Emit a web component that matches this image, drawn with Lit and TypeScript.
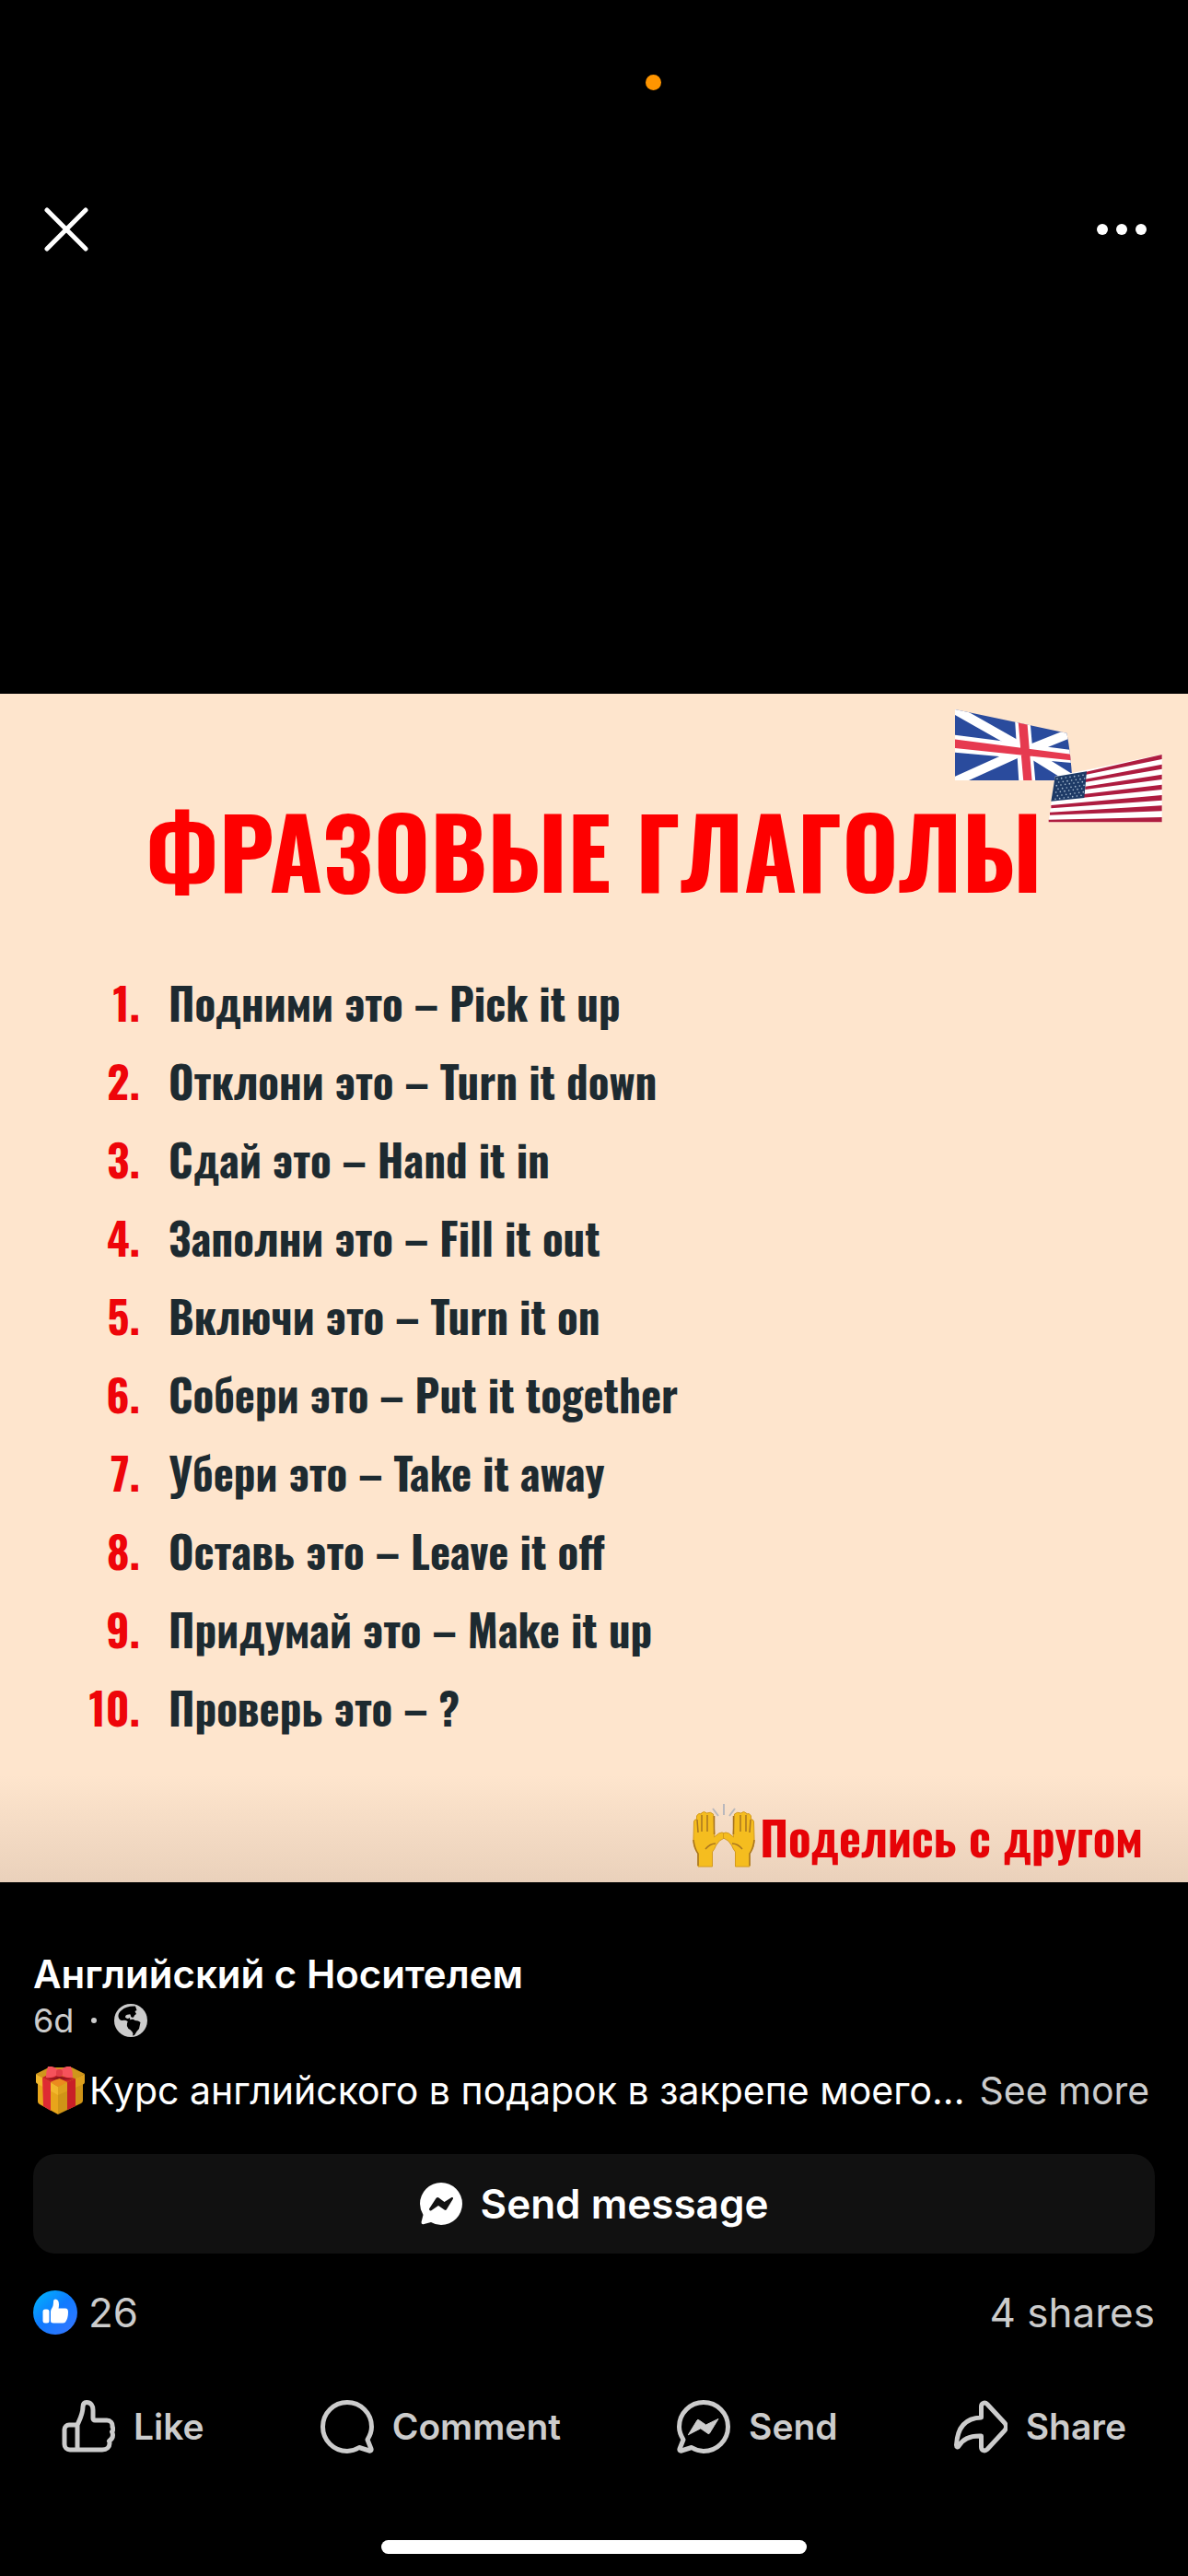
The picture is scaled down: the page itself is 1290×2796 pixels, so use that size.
import { LitElement, html, css, svg } from "lit";
import { customElement } from "lit/decorators.js";

const VERBS = [
  "Подними это – Pick it up",
  "Отклони это – Turn it down",
  "Сдай это – Hand it in",
  "Заполни это – Fill it out",
  "Включи это – Turn it on",
  "Собери это – Put it together",
  "Убери это – Take it away",
  "Оставь это – Leave it off",
  "Придумай это – Make it up",
  "Проверь это – ?",
];

// Staggered rows of dots for the star field of the US flag.
const STARS = Array.from({ length: 7 }, (_, r) =>
  Array.from({ length: 7 }, (_, c) => ({
    x: 444 + c * 14 + (r % 2) * 6 - r,
    y: 316 + r * 11 - c * 2,
  }))
).flat();

const ACTIONS = [
  {
    label: "Like",
    icon: svg`<path d="M17 27H8a5 5 0 0 0-5 5v16a6 6 0 0 0 6 6h35c5 0 8-3 8-7 0-1 0-2-.500-2.500 2.500-1.500 4-4 4-6.500 0-1.500-.500-2.500-1-3.500 1.500-1.500 1.500-4 .5-5.500.5-4-2-7-6-7H36a2 2 0 0 1-2-2V11c0-5-2.500-8.500-7-8.500-3 0-4 2-4 5C23 15 20 20 17 27zM17 27v27"/>`,
  },
  {
    label: "Comment",
    icon: svg`<path d="M51 43c2.500-4 4.500-9 4.500-14A26.500 26.500 0 1 0 29 55.500c4.500 0 9-1.500 13-4l11 3.500c1.500.5 2.500-.5 2-2z"/>`,
  },
  {
    label: "Send",
    icon: svg`<path d="M7 43c-2.500-4-4.500-9-4.500-14A26.500 26.500 0 1 1 29 55.500c-4.500 0-9-1.500-13-4L5 55c-1.500.5-2.500-.5-2-2z"/><path class="solid" d="M12.500 37.500l9.500-15.500q.5-1 1.500-.5l8 5.500 13.500-6.500-9.500 15.500q-.5 1-1.500.5l-8-5.500z"/>`,
  },
  {
    label: "Share",
    icon: svg`<path d="M29.500 19V7c0-4 4-5 6.500-2.500L55 25c2 2.500 2 5.500 0 8L36 53.500c-2.500 2.500-6.500 1.500-6.500-2.500V39C17 38.500 9 43 5 50c-1 1.500-2.500 1-2.500-1C3.500 30 12 19.500 29.500 19z"/>`,
  },
];

@customElement("app-root")
export class AppRoot extends LitElement {
  static styles = css`
    :host {
      display: grid;
      grid-template-columns: minmax(0, 1fr);
      grid-template-rows: 1fr auto 1fr;
      min-height: 100vh;
      background: #000;
      color: #fff;
      font-family: Inter, "Liberation Sans", sans-serif;
    }
    svg {
      display: block;
      flex: none;
    }
    button {
      display: flex;
      align-items: center;
      border: 0;
      padding: 0;
      background: none;
      color: inherit;
      font: inherit;
      cursor: pointer;
    }
    .top {
      display: flex;
      flex-direction: column;
      gap: 127px;
    }
    .status {
      display: flex;
      justify-content: center;
      padding: 81px 0 0 128px;
    }
    .mic {
      width: 17px;
      height: 17px;
      border-radius: 50%;
      background: #ff9500;
    }
    .bar {
      display: flex;
      justify-content: space-between;
      align-items: center;
      padding: 0 44px;
    }
    .poster {
      position: relative;
      display: flex;
      flex-direction: column;
      box-sizing: border-box;
      aspect-ratio: 1;
      padding: 99px 49px 0 80px;
      background: linear-gradient(#fee5cd 0 91%, #ead1bb 100%);
      font-family: Oswald, "Roboto Condensed", sans-serif;
      font-weight: 700;
    }
    .flags {
      position: absolute;
      top: 15px;
      right: 25px;
    }
    .title {
      margin: 0 0 54px 78px;
      font-size: 105px;
      line-height: 140px;
      color: #fe0000;
      white-space: nowrap;
    }
    .verbs {
      margin: 0;
      padding: 0;
      list-style: none;
      font-size: 47px;
      line-height: 85px;
      color: #1d2a30;
    }
    .verb {
      display: grid;
      grid-template-columns: 72px 1fr;
      column-gap: 31px;
      white-space: nowrap;
    }
    .num {
      color: #ee050a;
      justify-self: end;
    }
    .share-line {
      display: flex;
      justify-content: flex-end;
      align-items: center;
      gap: 5px;
      margin: 57px 0 0;
      font-size: 51px;
      line-height: 80px;
      color: #e60307;
      white-space: nowrap;
    }
    .details {
      display: flex;
      flex-direction: column;
      padding: 74px 36px 24px;
    }
    .author {
      margin: 0;
      font-size: 42px;
      line-height: 52px;
      font-weight: 600;
    }
    .meta {
      display: flex;
      align-items: center;
      gap: 19px;
      font-size: 36px;
      line-height: 48px;
      color: #ccc;
    }
    .sep {
      width: 6px;
      height: 6px;
      border-radius: 50%;
      background: #ccc;
    }
    .caption {
      display: flex;
      align-items: center;
      margin: 24px 0 0;
      font-size: 41px;
      line-height: 56px;
      white-space: nowrap;
    }
    .gift {
      margin: 0 5px 0 3px;
    }
    .more {
      margin-left: 16px;
      color: #ccc;
    }
    .message {
      justify-content: center;
      gap: 20px;
      margin: 41px 0 40px;
      min-height: 108px;
      border-radius: 24px;
      background: #111;
      font-size: 44px;
      font-weight: 600;
    }
    .counts {
      display: flex;
      align-items: center;
      gap: 12px;
      font-size: 44px;
      line-height: 48px;
      color: #ccc;
    }
    .shares {
      margin-left: auto;
    }
    .actions {
      display: flex;
      justify-content: space-between;
      padding: 70px 31px 93px;
      color: #ccc;
      font-size: 39px;
      font-weight: 600;
      line-height: 60px;
    }
    .action {
      gap: 20px;
    }
    .line-icon {
      fill: none;
      stroke: currentColor;
      stroke-width: 5;
      stroke-linejoin: round;
      stroke-linecap: round;
    }
    .solid {
      fill: currentColor;
      stroke-width: 1;
    }
    .home {
      width: 38%;
      height: 15px;
      margin: 0 auto;
      border-radius: 8px;
      background: #fff;
    }
  `;

  private flags() {
    return html`<svg class="flags" width="230" height="127" viewBox="105 84 690 381" role="img" aria-label="UK and US flags">
      <defs>
        <clipPath id="uk"><path d="M111 90L300 130 475 167Q488 230 493 321H111z" /></clipPath>
      </defs>
      <g clip-path="url(#uk)">
        <path fill="#2a4b9d" d="M100 80h400v250H100z" />
        <path stroke="#fff" stroke-width="30" d="M110 90L325 212M355 232L500 322M100 330L325 228M350 222L500 162" />
        <path fill="#fff" d="M306 120l49 0 18 205h-54zM100 172l390 50v42L100 229z" />
        <path fill="#e63a50" d="M317 130l29 0 16 195h-28zM100 186l390 50v20L100 215z" />
      </g>
      <path fill="#fff" d="M437 308L785 236v221H416z" />
      <path
        fill="#ae1c40"
        d="M535 294l250-57v15L535 303zM535 317l250-48v15L535 327zM535 341l250-39v16L535 351zM530 366l255-31v16L530 377zM424 402l361-33v17L424 412zM420 425l365-22v18L420 434zM416 449l369-8v16H416z"
      />
      <path fill="#1d3a66" d="M437 309l103-17-8 86-108 11z" />
      ${STARS.map((s) => svg`<circle cx=${s.x} cy=${s.y} r="2.500" fill="#a9bdd2"/>`)}
    </svg>`;
  }

  private hands() {
    const hand = svg`<path fill="#f5bd1f" stroke="#d49a1e" stroke-width="1" d="M6 63V49Q0 42 1 32L1.500 14q1-3 3-2V8q2-4 5-2V5q3-3 6 0V5q4-2 7 1l1 16q1 6 0 9l5-4q4-2 6 0v5q-6 2-9 8-2 5-4 7v16z"/><path fill="none" stroke="#a87520" stroke-width="1.500" d="M5 12l1 14M10 7v18M16 7v18M23.500 8v20M1 34q1 9 5 15v13M14 44q5-6 11-6"/>`;
    return html`<svg width="68" height="72" viewBox="0 -6 68 72" role="img" aria-label="Raised hands">
      <g>${hand}</g>
      <g transform="matrix(-1 0 0 1 68 0)">${hand}</g>
      <path stroke="#b9b8bd" stroke-width="2" d="M34-5V7M22 0l6 8M46 0l-6 8" />
    </svg>`;
  }

  private gift() {
    return html`<svg class="gift" width="53" height="52" viewBox="0 0 53 52" role="img" aria-label="Gift">
      <path fill="#d0961c" d="M0 8L14 1h25l14 7-29 16z" />
      <path fill="#e8a51b" d="M2 16l22 11v25L4 41q-2-1-2-3z" />
      <path fill="#cf9417" d="M51 16L24 27v25l25-12q2-1 2-3z" />
      <path fill="#f2b72c" d="M0 8l24 14v9L2 19q-2-1-2-2z" />
      <path fill="#dda01d" d="M53 8L24 22v9l28-12q1-1 1-2z" />
      <path fill="#de2a33" d="M7 12l9 5v31l-8-5z" />
      <path fill="#c81f27" d="M34 17l9-4v30l-9 4z" />
      <path fill="#c81f27" d="M7 12l8-4 28 5-9 4-9-4-9 4z" />
      <path fill="#ec8a1e" d="M16 17l9-4 9 4-10 5z" />
      <path fill="#8f171d" d="M11 12q7 2 12-1h5q5 3 12 1-7 4-14 1-8 3-15-1z" />
      <path fill="#f5525b" d="M13 0q-2 5-2 12 7 1 12-3h5q5 4 12 3 0-7-2-12-6-1-10 3-2-1-5 0-4-4-10-3z" />
      <rect x="22" y="3" width="7" height="8" rx="3" fill="#e03c46" />
    </svg>`;
  }

  render() {
    return html`
      <header class="top">
        <div class="status"><span class="mic"></span></div>
        <nav class="bar">
          <button aria-label="Close">
            <svg width="56" height="48" viewBox="0 0 56 48">
              <path stroke="#fff" stroke-width="5" stroke-linecap="round" d="M7 3l42 42M49 3L7 45" />
            </svg>
          </button>
          <button aria-label="More options">
            <svg width="56" height="48" viewBox="0 0 56 48" fill="#fff">
              <circle cx="7" cy="24" r="6" /><circle cx="28" cy="24" r="6" /><circle cx="49" cy="24" r="6" />
            </svg>
          </button>
        </nav>
      </header>

      <main class="poster">
        ${this.flags()}
        <h1 class="title">ФРАЗОВЫЕ ГЛАГОЛЫ</h1>
        <ol class="verbs">
          ${VERBS.map((v, i) => html`<li class="verb"><span class="num">${i + 1}.</span><span>${v}</span></li>`)}
        </ol>
        <p class="share-line">${this.hands()}<span>Поделись с другом</span></p>
      </main>

      <footer class="details">
        <h2 class="author">Английский с Носителем</h2>
        <div class="meta">
          <span>6d</span><span class="sep"></span>
          <svg width="36" height="36" viewBox="0 0 36 36" role="img" aria-label="Public">
            <circle cx="18" cy="18" r="18" fill="#ccc" />
            <path
              d="M23 2.500Q13 2 8 7 4 10 4.500 14q1 4 4 4 4-1 6 1 0 1 1.500 1 2-3 1-5-3 2-5-.5 0-3 4-3 2-1 2 2 1 2 3 1 1-3 3-3.500l-1.500-3 2-1zM14 21q-1 3 1.500 6 4 2 5 5.500l-.5 2 2-.5q2-4 5-7l1.500-7q-2-2-6-2-2-2-4-1-3 0-4.500 4z"
            />
          </svg>
        </div>
        <p class="caption">
          ${this.gift()}<span>Курс английского в подарок в закрепе моего...</span>
          <button class="more">See more</button>
        </p>
        <button class="message">
          <svg width="46" height="46" viewBox="0 0 46 46">
            <path fill="#fff" d="M3.500 35Q0 29 0 23A23 23 0 1 1 23 46q-6 0-11-3l-7.500 2Q1.500 46 1.500 43z" />
            <path fill="#111" d="M10 28.500L17.500 17q1.500-1.500 3-.5l6 4.500 8-5q2-.5 1.500 1.500L29 29q-1 1.500-2.500.5L20 25l-8 5.500q-2 .5-2-2z" />
          </svg>
          <span>Send message</span>
        </button>
        <div class="counts">
          <svg width="48" height="48" viewBox="0 0 48 48" role="img" aria-label="Likes">
            <defs>
              <linearGradient id="blue" x1="0.100" y1="0.100" x2="0.800" y2="0.900">
                <stop offset="0" stop-color="#02adfc" /><stop offset="0.500" stop-color="#0f7bff" /><stop offset="1" stop-color="#2f77ff" />
              </linearGradient>
            </defs>
            <circle cx="24" cy="24" r="24" fill="url(#blue)" />
            <rect x="10.500" y="20.500" width="7" height="15" rx="2.500" fill="#fff" />
            <path fill="#fff" d="M19 33V23q0-2 1.500-4t1.500-7q0-2.500 2-2.500 4 0 4 6 0 2-.5 4H35q3 0 3 4 0 7-3 11-1 1-3 1H22q-3 0-3-2.500z" />
          </svg>
          <span>26</span>
          <span class="shares">4 shares</span>
        </div>
        <div class="actions">
          ${ACTIONS.map(
            (a) => html`<button class="action">
              <svg class="line-icon" width="58" height="58" viewBox="0 0 58 58">${a.icon}</svg>
              <span>${a.label}</span>
            </button>`
          )}
        </div>
        <div class="home"></div>
      </footer>
    `;
  }
}
